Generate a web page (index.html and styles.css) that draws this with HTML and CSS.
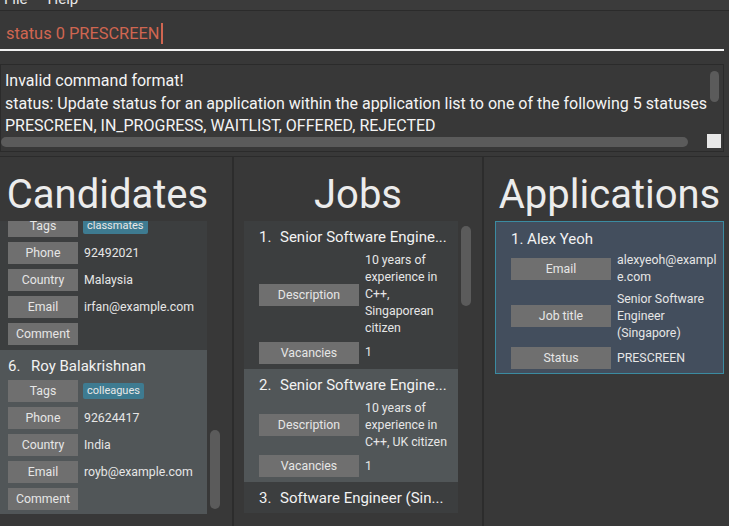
FILE: index.html
```html
<!DOCTYPE html>
<html>
<head>
<meta charset="utf-8">
<link rel="stylesheet" href="styles.css">
</head>
<body>
<div class="menubar"><span>File</span><span>Help</span></div>
<div class="command"><div class="cmd-text">status 0 PRESCREEN<span class="caret"></span></div></div>
<div class="result">
  <div class="result-text">Invalid command format!<br>status: Update status for an application within the application list to one of the following 5 statuses<br>PRESCREEN, IN_PROGRESS, WAITLIST, OFFERED, REJECTED</div>
  <div class="vscroll"><div class="vthumb"></div></div>
  <div class="hscroll"><div class="hthumb"></div></div>
  <div class="corner-cell"><div class="corner"></div></div>
</div>
<div class="panels">
  <section class="panel panel-cand">
    <div class="heading">Candidates</div>
    <div class="list-row">
      <div class="viewport cand-view">
        <div class="cand-inner">
          <div class="ccard even clipped">
            <div class="row"><div class="lbl">Tags</div><span class="tag">classmates</span></div>
            <div class="row"><div class="lbl">Phone</div><span class="val">92492021</span></div>
            <div class="row"><div class="lbl">Country</div><span class="val">Malaysia</span></div>
            <div class="row"><div class="lbl">Email</div><span class="val">irfan@example.com</span></div>
            <div class="row"><div class="lbl">Comment</div><span class="val"></span></div>
          </div>
          <div class="ccard odd">
            <div class="name"><span class="cid">6.</span><span>Roy Balakrishnan</span></div>
            <div class="row"><div class="lbl">Tags</div><span class="tag">colleagues</span></div>
            <div class="row"><div class="lbl">Phone</div><span class="val">92624417</span></div>
            <div class="row"><div class="lbl">Country</div><span class="val">India</span></div>
            <div class="row"><div class="lbl">Email</div><span class="val">royb@example.com</span></div>
            <div class="row"><div class="lbl">Comment</div><span class="val"></span></div>
          </div>
        </div>
      </div>
      <div class="track"><div class="thumb cand-thumb"></div></div>
    </div>
  </section>
  <div class="sep"></div>
  <section class="panel panel-jobs">
    <div class="heading">Jobs</div>
    <div class="list-row">
      <div class="viewport jobs-view">
        <div class="jcard even">
          <div class="jtitle"><span class="jid">1.</span><span>Senior Software Engine...</span></div>
          <div class="jrow jdesc"><div class="jlbl">Description</div><div class="jval">10 years of experience in C++, Singaporean citizen</div></div>
          <div class="jrow jvac"><div class="jlbl">Vacancies</div><div class="jval">1</div></div>
        </div>
        <div class="jcard odd">
          <div class="jtitle"><span class="jid">2.</span><span>Senior Software Engine...</span></div>
          <div class="jrow jdesc"><div class="jlbl">Description</div><div class="jval">10 years of experience in C++, UK citizen</div></div>
          <div class="jrow jvac"><div class="jlbl">Vacancies</div><div class="jval">1</div></div>
        </div>
        <div class="jcard even">
          <div class="jtitle"><span class="jid">3.</span><span>Software Engineer (Sin...</span></div>
        </div>
      </div>
      <div class="track"><div class="thumb jobs-thumb"></div></div>
    </div>
  </section>
  <div class="sep"></div>
  <section class="panel panel-apps">
    <div class="heading">Applications</div>
    <div class="acard">
      <div class="aname">1. Alex Yeoh</div>
      <div class="arow a-email"><div class="jlbl">Email</div><div class="aval">alexyeoh@example.com</div></div>
      <div class="arow a-job"><div class="jlbl">Job title</div><div class="aval">Senior Software Engineer (Singapore)</div></div>
      <div class="arow a-status"><div class="jlbl">Status</div><div class="aval">PRESCREEN</div></div>
    </div>
  </section>
</div>
</body>
</html>
```
FILE: styles.css
```css
* { box-sizing: border-box; }
html, body { margin: 0; padding: 0; }
body {
  background: #383838;
  font-family: Roboto, "Noto Sans", sans-serif;
  color: #ffffff;
  width: 729px;
  height: 526px;
  overflow: hidden;
}
.menubar {
  height: 11px;
  overflow: hidden;
  background: #3b3b3b;
  border-bottom: 1px solid #2b2b2b;
  display: flex;
  gap: 20px;
  padding-left: 4px;
}
.menubar span {
  display: block;
  font-size: 15px;
  line-height: 18px;
  margin-top: -10px;
  color: #e8e8e8;
}
.command {
  height: 40px;
  margin-right: 5px;
  border-bottom: 2px solid #f2f2f2;
  display: flex;
  align-items: center;
  padding: 6px 0 0 6px;
}
.cmd-text {
  display: flex;
  align-items: center;
  font-size: 16.4px;
  color: #d06651;
}
.caret {
  width: 2px;
  height: 21px;
  background: #d06651;
  margin-left: 1px;
}
.result {
  margin: 13px 5px 0 0;
  height: 88px;
  border: 1px solid #2b2b2b;
  display: grid;
  grid-template-columns: 1fr 16px;
  grid-template-rows: 1fr 16px;
}
.result-text {
  padding: 5px 0 0 4px;
  font-size: 16px;
  line-height: 22.5px;
  white-space: nowrap;
  overflow: hidden;
  color: #f4f4f4;
}
.vthumb {
  width: 9px;
  height: 31px;
  margin: 6px 0 0 3px;
  background: #5b5b5b;
  border-radius: 5px;
}
.hthumb {
  height: 10px;
  margin: 2px 19px 0 0;
  background: #5b5b5b;
  border-radius: 5px;
}
.corner {
  width: 14px;
  height: 14px;
  margin-top: -1px;
  background: #e8e8e8;
}
.panels {
  margin-top: 4px;
  border-top: 1px solid #2b2b2b;
  display: flex;
  height: 370px;
}
.sep {
  width: 2px;
  background: #2c2c2c;
  flex: none;
}
.panel {
  display: flex;
  flex-direction: column;
  flex: none;
}
.panel-cand { width: 232px; padding: 0 10px 0 0; }
.panel-jobs { width: 248px; padding: 0 10px; }
.panel-apps { width: 245px; padding: 0 5px 0 11px; }
.heading {
  font-size: 40px;
  line-height: 50px;
  height: 50px;
  margin: 12.5px 0 1.5px;
  text-align: center;
  color: #ececec;
  white-space: nowrap;
}
.panel-cand .heading { padding-right: 7px; }
.list-row {
  display: flex;
  height: 293px;
}
.viewport {
  overflow: hidden;
  flex: none;
}
.cand-view { width: 207px; }
.jobs-view { width: 214px; height: 292px; background: #3c3e3f; }
.cand-inner { margin-top: -6px; }
.track { flex: 1; }
.thumb {
  width: 10px;
  margin-left: 3px;
  background: #5b5b5b;
  border-radius: 5px;
}
.cand-thumb { margin-top: 209px; height: 79px; }
.jobs-thumb { margin-top: 5px; height: 80px; }
.even { background: #3c3e3f; }
.odd { background: #515658; }
.ccard {
  padding: 5px 0 5px 8px;
  display: flex;
  flex-direction: column;
  gap: 5px;
}
.ccard.clipped { padding-top: 0; }
.name {
  font-size: 15px;
  line-height: 22px;
  margin-bottom: -2px;
  display: flex;
  color: #f2f2f2;
}
.cid { width: 23px; flex: none; }
.row {
  display: flex;
  align-items: center;
  gap: 5px;
}
.lbl {
  width: 70px;
  height: 22px;
  flex: none;
  background: #6f6f6f;
  display: flex;
  align-items: center;
  justify-content: center;
  font-size: 12.3px;
  color: #e6e6e6;
}
.val {
  font-size: 12.3px;
  color: #e6e6e6;
  padding-left: 1px;
}
.tag {
  background: #3e7b91;
  font-size: 11px;
  line-height: 14px;
  padding: 1px 4px;
  border-radius: 2px;
  color: #e8e8e8;
}
.jcard {
  padding: 6px 5px 5px 15px;
}
.jtitle {
  font-size: 15px;
  line-height: 20px;
  white-space: nowrap;
  display: flex;
  color: #f2f2f2;
}
.jid { width: 21px; flex: none; }
.jrow {
  display: flex;
  align-items: center;
  gap: 6px;
}
.jdesc { margin-top: 5px; }
.jvac { margin-top: 4.5px; }
.jlbl {
  width: 100px;
  height: 22px;
  flex: none;
  background: #6f6f6f;
  display: flex;
  align-items: center;
  justify-content: center;
  font-size: 12.3px;
  color: #e6e6e6;
}
.jval {
  width: 88px;
  flex: none;
  font-size: 12.3px;
  line-height: 17px;
  color: #e6e6e6;
}
.acard {
  border: 1px solid #3b8ba1;
  background: #434e5d;
  padding: 7px 5px 4px 15px;
}
.aname {
  font-size: 15px;
  line-height: 20px;
  color: #f2f2f2;
}
.arow {
  display: flex;
  align-items: center;
  gap: 6px;
}
.a-email { margin-top: 2.5px; }
.a-job { margin-top: 5px; }
.a-status { margin-top: 5.5px; }
.aval {
  width: 100px;
  flex: none;
  font-size: 12.3px;
  line-height: 17px;
  color: #e6e6e6;
  overflow-wrap: anywhere;
}
```
